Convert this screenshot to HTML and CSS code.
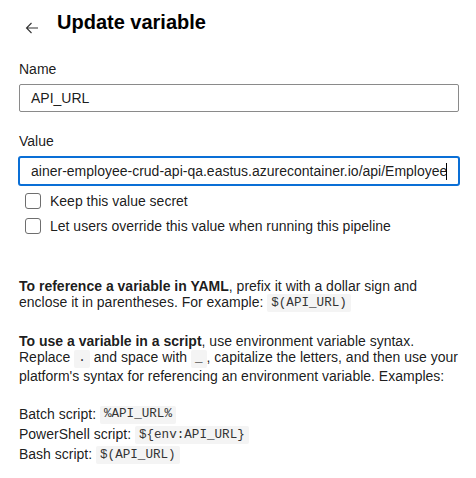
FILE: index.html
```html
<!DOCTYPE html>
<html>
<head>
<meta charset="utf-8">
<link rel="stylesheet" href="styles.css">
</head>
<body>
<div class="panel">
  <div class="header">
    <svg class="back" viewBox="0 0 14 14" width="14" height="14"><path d="M13 7H1.5M6.5 2L1.5 7l5 5" fill="none" stroke="#333" stroke-width="1.1"/></svg>
    <h1 class="title">Update variable</h1>
  </div>

  <div class="field field-name">
    <div class="label">Name</div>
    <div class="input">API_URL</div>
  </div>

  <div class="field field-value">
    <div class="label">Value</div>
    <div class="input input-focused"><span class="val">ainer-employee-crud-api-qa.eastus.azurecontainer.io/api/Employee</span><span class="caret"></span></div>
  </div>

  <div class="checks">
    <div class="check-row"><span class="box"></span><span class="check-label">Keep this value secret</span></div>
    <div class="check-row"><span class="box"></span><span class="check-label">Let users override this value when running this pipeline</span></div>
  </div>

  <p class="help help-yaml"><b>To reference a variable in YAML</b>, prefix it with a dollar sign and enclose it in parentheses. For example: <code>$(API_URL)</code></p>
  <p class="help help-script"><b>To use a variable in a script</b>, use environment variable syntax. Replace <code>.</code> and space with <code>_</code>, capitalize the letters, and then use your platform's syntax for referencing an environment variable. Examples:</p>
  <div class="examples">
    <div>Batch script: <code>%API_URL%</code></div>
    <div>PowerShell script: <code>${env:API_URL}</code></div>
    <div>Bash script: <code>$(API_URL)</code></div>
  </div>
</div>
</body>
</html>
```
FILE: styles.css
```css
html, body {
  margin: 0;
  padding: 0;
  background: #fff;
}
body {
  font-family: "Liberation Sans", Arial, sans-serif;
  font-size: 14px;
  line-height: 16px;
  color: rgba(0, 0, 0, 0.9);
}
.panel {
  width: 440px;
  padding-left: 19px;
}
.header {
  display: flex;
  align-items: flex-start;
  padding-top: 10px;
}
.back {
  display: block;
  margin: 11px 18px 0 6px;
  flex: none;
}
.title {
  margin: 0;
  font-size: 20px;
  line-height: 24px;
  font-weight: bold;
  color: #000;
}
.field-name {
  margin-top: 26px;
}
.field-value {
  margin-top: 21px;
}
.label {
  color: rgba(0, 0, 0, 0.9);
  margin-bottom: 7px;
}
.input {
  box-sizing: border-box;
  height: 28px;
  border: 1px solid #8a8a8a;
  border-radius: 2px;
  padding: 5px 11px 0 11px;
  line-height: 16px;
  white-space: nowrap;
  overflow: hidden;
}
.input-focused {
  border: 2px solid #0a6fd6;
  margin: 0 -1px;
  height: 30px;
  padding: 5px 11px 0 11px;
  border-radius: 3px;
}
.caret {
  display: inline-block;
  width: 1px;
  height: 17px;
  background: #000;
  vertical-align: -4px;
  margin-left: -1px;
}
.checks {
  margin-top: 2px;
}
.check-row {
  display: flex;
  align-items: center;
  height: 25px;
}
.box {
  box-sizing: border-box;
  width: 16px;
  height: 16px;
  border: 1px solid #6e6e6e;
  border-radius: 3px;
  margin: 0 9px 0 6px;
  flex: none;
}
.help {
  margin: 0;
}
.help-yaml {
  margin-top: 40px;
}
.help-script {
  margin-top: 21px;
}
code {
  display: inline-block;
  vertical-align: middle;
  font-family: "Liberation Mono", "DejaVu Sans Mono", monospace;
  font-size: 12.6px;
  line-height: 15px;
  padding: 1.5px 4px;
  background: #f4f4f4;
  border-radius: 2px;
  color: #333;
}
.examples {
  margin-top: 20px;
  line-height: 20px;
}
```
